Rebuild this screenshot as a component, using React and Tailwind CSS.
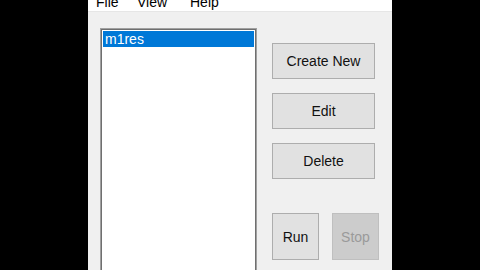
import React from 'react'

const font = { fontFamily: '"Liberation Sans", Arial, sans-serif' }

function WinButton({ label, className, disabled }) {
  return (
    <button
      className={
        'flex items-center justify-center border text-[14px] leading-none ' +
        (disabled
          ? 'bg-[#cccccc] border-[#bfbfbf] text-[#9a9a9a] '
          : 'bg-[#e1e1e1] border-[#adadad] text-[#111] ') +
        className
      }
      disabled={disabled}
    >
      {label}
    </button>
  )
}

export default function App() {
  const items = ['m1res']

  return (
    <div className="w-[480px] h-[270px] bg-black flex overflow-hidden" style={font}>
      <div className="ml-[88px] w-[304px] h-full flex flex-col bg-[#f0f0f0]">
        {/* menu bar, text clipped at top */}
        <div className="h-[12px] bg-white border-b border-[#e6e6e6] overflow-hidden shrink-0 relative">
          <div className="flex text-[14px] text-black leading-none -mt-[5px] pl-[8px]">
            <span className="w-[41px]">File</span>
            <span className="w-[53px]">View</span>
            <span>Help</span>
          </div>
        </div>

        <div className="flex flex-1 pl-[12px] pt-[16px] min-h-0">
          {/* list box */}
          <div className="w-[157px] h-[260px] shrink-0 border border-[#a0a0a0] bg-white">
            <div className="h-full border border-[#6f6f6f] bg-white p-[1px]">
              {items.map((it, i) => (
                <div
                  key={it}
                  className={
                    'h-[16px] text-[14px] leading-[16px] pl-[2px] ' +
                    (i === 0 ? 'bg-[#0078d7] text-white' : 'text-black')
                  }
                >
                  {it}
                </div>
              ))}
            </div>
          </div>

          {/* buttons */}
          <div className="flex flex-col ml-[15px] pt-[15px]">
            <WinButton label="Create New" className="w-[103px] h-[36px]" />
            <WinButton label="Edit" className="w-[103px] h-[36px] mt-[14px]" />
            <WinButton label="Delete" className="w-[103px] h-[36px] mt-[14px]" />
            <div className="flex gap-[13px] mt-[34px]">
              <WinButton label="Run" className="w-[47px] h-[47px]" />
              <WinButton label="Stop" className="w-[47px] h-[47px]" disabled />
            </div>
          </div>
        </div>
      </div>
    </div>
  )
}
